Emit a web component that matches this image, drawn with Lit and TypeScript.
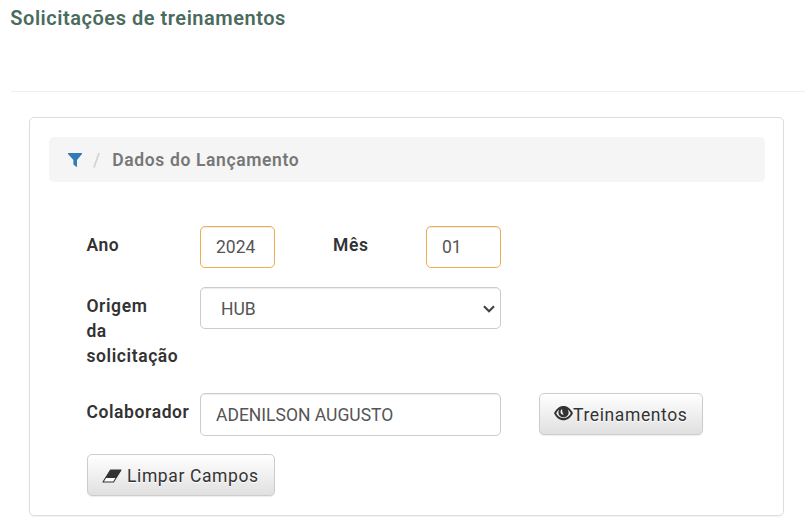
import { LitElement, html, css } from "lit";
import { customElement } from "lit/decorators.js";

@customElement("app-root")
export class AppRoot extends LitElement {
  static styles = css`
    :host {
      display: block;
      height: 525px;
      overflow: hidden;
      background: #fff;
      color: #333;
      font-family: Roboto, "Liberation Sans", sans-serif;
      font-size: 17.5px;
      line-height: 25px;
    }
    * { box-sizing: border-box; }
    .title {
      margin: 0 0 0 11px;
      height: 92px;
      padding-top: 6px;
      border-bottom: 1px solid #eee;
      color: #4a6b5d;
      font-size: 20px;
      line-height: 25px;
      font-weight: 600;
      letter-spacing: 0.53px;
      text-indent: -0.7px;
    }
    .panel {
      margin: 25px 21px 0 29px;
      height: 399px;
      padding: 19px 18px 19px 19px;
      border: 1px solid #ddd;
      border-radius: 5px;
      box-shadow: 0 1px 1px rgba(0, 0, 0, 0.05);
    }
    .crumbs {
      display: flex;
      align-items: center;
      height: 45px;
      padding: 2px 0 0 18px;
      border-radius: 5px;
      background: #f5f5f5;
    }
    .filter { display: block; width: 16px; height: 16px; margin-top: -1px; color: #337ab7; }
    .slash { margin: 0 12px 0 10px; color: #ccc; }
    .current { color: #777; font-weight: 600; letter-spacing: 0.63px; }
    .form {
      display: grid;
      grid-template-columns: 114px 75px 58px 93px 75px 38px 164px;
      grid-template-rows: 42px 87px 43px 42px;
      row-gap: 19px;
      margin: 44px 0 0 37px;
    }
    label {
      grid-column: 1;
      padding: 7px 0 0 0.4px;
      font-weight: 600;
      letter-spacing: 0.6px;
    }
    .month { grid-column: 4; padding-left: 0; }
    .month-field { grid-column: 5; }
    .person-label { white-space: nowrap; }
    .origin span { display: block; }
    .wide { grid-column: 2 / 6; }
    .select { position: relative; height: 42px; }
    .control {
      display: block;
      width: 100%;
      height: 42px;
      margin: 0;
      padding: 0 15px;
      border: 1px solid #ccc;
      border-radius: 5px;
      background: #fff;
      box-shadow: inset 0 1px 1px rgba(0, 0, 0, 0.075);
      color: #555;
      font-family: inherit;
      font-size: 17.5px;
      font-weight: 400;
      outline: none;
    }
    select.control { appearance: none; padding: 2px 20px 0 20px; }
    .chevron { position: absolute; right: 5px; top: 17px; width: 14px; height: 10px; pointer-events: none; }
    .required { border-color: #f0ad4e; }
    .tall { height: 43px; }
    .button {
      display: flex;
      align-items: center;
      height: 42px;
      padding: 1px 0 0 14px;
      border: 1px solid #ccc;
      border-radius: 5px;
      background: linear-gradient(#fff, #e0e0e0);
      box-shadow: inset 0 1px 0 rgba(255, 255, 255, 0.15), 0 1px 1px rgba(0, 0, 0, 0.075);
      text-shadow: 0 1px 0 #fff;
      color: #333;
      font-family: inherit;
      font-size: 17.5px;
      font-weight: 400;
      letter-spacing: 0.61px;
      white-space: nowrap;
    }
    .show { grid-column: 7; }
    .clear { grid-column: 1 / 3; margin: -1px 0 0 1px; }
    .eye { width: 19px; height: 17px; margin-top: -2px; }
    .eraser { width: 20px; height: 14px; margin-right: 5px; }
  `;

  render() {
    return html`
      <h1 class="title">Solicitações de treinamentos</h1>
      <section class="panel">
        <nav class="crumbs">
          <svg class="filter" viewBox="0 0 16 16" fill="currentColor"><path d="M1 1h14v1L10 8v7.3L6.400 12.500V8L1 2z"/></svg>
          <span class="slash">/</span><span class="current">Dados do Lançamento</span>
        </nav>
        <form class="form">
          <label for="year">Ano</label>
          <input id="year" class="control required" .value=${"2024"} />
          <label class="month" for="month">Mês</label>
          <div class="month-field"><input id="month" class="control required" .value=${"01"} /></div>
          <label class="origin" for="origin"><span>Origem</span><span>da</span><span>solicitação</span></label>
          <div class="wide select">
            <select id="origin" class="control"><option>HUB</option></select>
            <svg class="chevron" viewBox="0 0 14 10"><path d="M2 2.200L7 7.200L12 2.200" fill="none" stroke="#444" stroke-width="2.200"/></svg>
          </div>
          <label class="person-label" for="person">Colaborador</label>
          <div class="wide"><input id="person" class="control tall" .value=${"ADENILSON AUGUSTO"} /></div>
          <button type="button" class="button show">
            <svg class="eye" viewBox="0 0 19 17"><path fill="#333" fill-rule="evenodd" d="M0 8.300C2.200 3.700 5.600 1.100 9.500 1.100s7.300 2.600 9.500 7.200c-2.200 4.600-5.600 7-9.500 7S2.200 12.900 0 8.300zM2.200 8.300c1.500 3.100 4 4.700 7.300 4.700s5.800-1.600 7.300-4.700C16.100 6.700 15 5.400 13.800 4.500c.5.900.8 1.900.8 2.900 0 2.800-2.300 4.900-5.100 4.900s-5.100-2.100-5.100-4.900c0-1 .3-2 .8-2.900C4 5.400 2.900 6.700 2.200 8.300zM8 4.100C6.400 5.200 6 7.200 7.200 8.900l2.400 1.200L8.400 7z"/></svg>
            <span>Treinamentos</span>
          </button>
          <button type="button" class="button clear">
            <svg class="eraser" viewBox="0 0 20 14"><path fill="#fff" stroke="#333" stroke-width="1.100" stroke-linejoin="round" d="M8.500 1H19L11.500 13H1z"/><path fill="#333" d="M8.500 1H19.200L14.200 9H3.500z"/></svg>
            <span>Limpar Campos</span>
          </button>
        </form>
      </section>
    `;
  }
}
